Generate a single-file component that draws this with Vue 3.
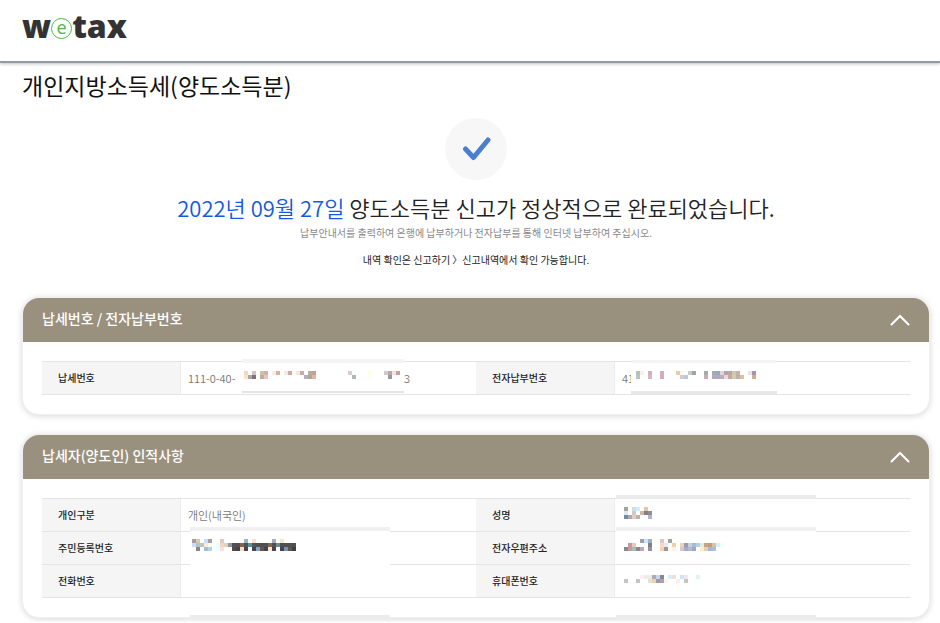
<template>
  <div class="page">
    <header class="site-header">
      <a class="logo" href="#" aria-label="wetax">
        <span>w</span><span class="logo-e">e</span><span>tax</span>
      </a>
    </header>

    <main class="content">
      <h1>개인지방소득세(양도소득분)</h1>

      <section class="result">
        <span class="result-icon">
          <svg width="30" height="26" viewBox="0 0 30 26" aria-hidden="true">
            <path d="M4.5 13 L12.5 21.5 L27 4" />
          </svg>
        </span>
        <p class="headline"><em>2022년 09월 27일</em> 양도소득분 신고가 정상적으로 완료되었습니다.</p>
        <p class="guide">납부안내서를 출력하여 은행에 납부하거나 전자납부를 통해 인터넷 납부하여 주십시오.</p>
        <p class="note">내역 확인은 신고하기 〉신고내역에서 확인 가능합니다.</p>
      </section>

      <section v-for="card in cards" :key="card.title" class="card">
        <div class="card-head">
          <h2>{{ card.title }}</h2>
          <button type="button" :aria-label="card.title" :aria-expanded="card.open" @click="card.open = !card.open">
            <svg :class="{ closed: !card.open }" width="20" height="12" viewBox="0 0 20 12" aria-hidden="true">
              <path d="M1.5 10.5 L10 2 L18.5 10.5" />
            </svg>
          </button>
        </div>
        <div v-show="card.open" class="card-body">
          <table>
            <tbody>
              <tr v-for="(row, i) in card.rows" :key="i">
                <template v-for="cell in row" :key="cell.label">
                  <th scope="row">{{ cell.label }}</th>
                  <td>
                    <span v-if="cell.value">{{ cell.value }}</span>
                    <span v-if="cell.tail" class="tail">{{ cell.tail }}</span>
                    <svg
                      v-if="cell.mask"
                      class="mask"
                      :class="cell.mask.name"
                      :width="cell.mask.width"
                      :height="cell.mask.height"
                      shape-rendering="crispEdges"
                      aria-hidden="true"
                    >
                      <rect width="100%" height="100%" fill="#fff" />
                      <rect
                        v-for="band in cell.mask.bands"
                        :key="band[0]"
                        :y="band[0]"
                        width="100%"
                        :height="band[1]"
                        :fill="band[2]"
                      />
                      <rect
                        v-for="(block, n) in blocks(cell.mask)"
                        :key="n"
                        :x="block.x"
                        :y="block.y"
                        width="4"
                        height="4"
                        :fill="block.fill"
                      />
                    </svg>
                  </td>
                </template>
              </tr>
            </tbody>
          </table>
        </div>
      </section>
    </main>
  </div>
</template>

<script setup>
import { ref } from "vue";

const BLOCK = 4;

// each line: [y, "column:color column:color ..."]
const taxNumberMask = {
  name: "mask-tax",
  width: 162,
  height: 34,
  left: 2,
  bands: [
    [0, 4, "#f4f4f4"],
    [32, 2, "#e4e4e4"],
  ],
  lines: [
    [12, "0:e8dac8 2:c8c4c8 4:ccc4a4 5:d0b0b0 7:f8ece8 8:d8b0a0 10:f4e8e4 11:d0a8a4 13:f4e8e4 14:d0a8a4 16:b0b0a0 17:c0a098 26:d8ccd0 31:ffffe0 35:d4c8cc 36:b8a8ac 37:f4e4e0 38:c8a0a0"],
    [16, "0:ffe4c4 1:b0a4a4 2:807078 4:b8b0a0 5:ecc4c0 15:b8a8cc 16:b0a890 17:e0b8a0 27:a8b8bc 31:f8fffc 36:989898"],
  ],
};

const payNumberMask = {
  name: "mask-pay",
  width: 146,
  height: 34,
  left: 5,
  bands: [
    [0, 3, "#f4f4f4"],
    [31, 3, "#e8e8e8"],
  ],
  lines: [
    [11, "0:b8c0bc 1:fcf0e4 3:d0b0bc 6:d0b0bc 10:e8ccb0 11:fff8f0 13:c8ccc8 14:a0a4a4 17:a0acb0 19:a8a8b0 20:98a8b8 21:dcd4e0 22:b8a0a4 23:b8a8a8 24:d0c8b0 25:c4b4a4 28:e8e4ec 29:a890b0"],
    [15, "0:b8c4c0 3:dcb4bc 6:d4acbc 11:e0c8c0 12:b0cce0 17:d0a8b8 19:b0a8c4 20:b0a8c0 21:b4b0b4 22:ecd8dc 23:c4a8a4 24:d0ccac 25:bcb0b8 26:e4c090 29:d0b08c"],
  ],
};

const residentMask = {
  name: "mask-resident",
  width: 200,
  height: 92,
  left: 2,
  bands: [
    [0, 4, "#f0f0f0"],
    [88, 4, "#ececec"],
  ],
  lines: [
    [12, "0:a0a0a4 1:e0c4ac 3:c8e0fc 4:a0a0a0 7:dcccc4 13:98b4cc 15:f8e0d0 20:a8acb8 22:fce4d0"],
    [16, "0:c8dcfc 1:b8c0c4 2:bcc4c4 3:fcecd8 4:fffce8 6:e8ffff 7:f0d4c4 8:e8d0b0 9:8898a4 10:505050 11:505050 12:806450 13:505054 14:5890a0 15:505458 16:505050 17:505050 18:505050 19:806850 20:505050 21:708890 22:505050 23:505050 24:505050 25:505050"],
    [20, "1:888888 3:a0bcdc 4:b8d0e8 6:e8ffff 7:f4e0d8 10:5c4840 11:44404c 12:f8dcc8 13:484450 15:444450 16:80a4cc 17:705048 18:444450 19:ffe4cc 20:484450 22:444450 23:7890b8 24:605850 25:404040"],
  ],
};

const personMask = {
  name: "mask-person",
  width: 200,
  height: 124,
  left: 8,
  bands: [
    [0, 4, "#ebebeb"],
    [32, 4, "#f0f0f0"],
    [120, 4, "#ebebeb"],
  ],
  lines: [
    [12, "0:a0a4a0 1:ffffec 2:d0dcf4 3:c8f0ff 5:e4c4a8"],
    [16, "0:e0e8f4 2:cccccc 4:d4b4a8 5:808080 6:909090"],
    [20, "0:708ca0 1:b0a8a4 2:e8ccc0 3:b8b4b0 6:b4b0d8"],
    [44, "4:a0a0a4 5:cce4fc 6:a0b0c8 7:fffcf0 9:d8c8c8 11:a0a0a0"],
    [48, "1:c898a0 2:e8c8b8 6:808084 9:fcd8c0 10:e0e8ff 12:ecd0a8 14:e8d4b8 15:9898b8 16:c8d0d0 17:a4bcdc 18:b8d0dc 19:dcecf0 20:c8a480 21:b8a080 22:e0c098 23:d4f0fc 24:f0ffff"],
    [52, "0:888888 1:c898a0 2:a0c0c0 3:888888 4:c0a8b0 6:9490a8 9:f8d0b8 10:a89484 12:fff4e0 14:d4c8d4 15:a8a8c8 16:b8b8cc 17:98a8c8 19:fff0c8 20:e8ccb4 21:a8b8d4 22:a8c0dc"],
    [80, "4:fcf0f0 5:ececec 6:f0ece4 7:b0a8b8 8:c0d8f4 9:888888 11:d0f0fc 12:e8e0dc 14:cce4fc 15:f0e8e8 18:dcf4f8"],
    [84, "0:c4c4c4 3:c4c4c4 6:e8e0d8 7:ecd0b0 8:a098a8 9:a8a0b8 10:fff4e0 13:fff0e4 15:c4c4c4"],
  ],
};

const cards = ref([
  {
    title: "납세번호 / 전자납부번호",
    open: true,
    rows: [
      [
        { label: "납세번호", value: "111-0-40-", tail: "3", mask: taxNumberMask },
        { label: "전자납부번호", value: "41", mask: payNumberMask },
      ],
    ],
  },
  {
    title: "납세자(양도인) 인적사항",
    open: true,
    rows: [
      [
        { label: "개인구분", value: "개인(내국인)" },
        { label: "성명", mask: personMask },
      ],
      [
        { label: "주민등록번호", mask: residentMask },
        { label: "전자우편주소" },
      ],
      [{ label: "전화번호" }, { label: "휴대폰번호" }],
    ],
  },
]);

function blocks(mask) {
  return mask.lines.flatMap(([y, line]) =>
    line.split(" ").map((item) => {
      const [column, color] = item.split(":");
      return { x: mask.left + Number(column) * BLOCK, y, fill: `#${color}` };
    })
  );
}
</script>

<style>
body {
  margin: 0;
  background: #fff;
}
</style>

<style scoped>
.page {
  font-family: "Noto Sans CJK KR", "Noto Sans", sans-serif;
  color: #222;
}

h1,
h2,
p {
  margin: 0;
}

.site-header {
  display: flex;
  box-sizing: border-box;
  height: 63px;
  padding: 5px 22px 0;
  border-bottom: 2px solid #929aa5;
  box-shadow: 0 1px 3px rgba(0, 0, 0, 0.25);
}

.logo {
  display: flex;
  align-items: center;
  height: 42px;
  font-family: "Open Sans", sans-serif;
  font-size: 32px;
  font-weight: 800;
  line-height: 42px;
  color: #333;
  text-decoration: none;
}

.logo-e {
  box-sizing: border-box;
  width: 21px;
  height: 21px;
  margin-top: 4px;
  border: 1px solid #4cb748;
  border-radius: 50%;
  background: #fff;
  font-size: 18px;
  font-weight: 400;
  line-height: 16px;
  text-align: center;
  color: #4cb748;
}

.content {
  padding: 6px 10px 4px 22px;
}

h1 {
  font-size: 23px;
  font-weight: 400;
  line-height: 32px;
  color: #111;
}

.result {
  display: flex;
  flex-direction: column;
  align-items: center;
  padding: 17px 0 29px;
  text-align: center;
}

.result-icon {
  display: flex;
  align-items: center;
  justify-content: center;
  width: 62px;
  height: 62px;
  border-radius: 50%;
  background: #f7f7f7;
}

.result-icon path {
  fill: none;
  stroke: #4a7fd0;
  stroke-width: 5;
  stroke-linecap: round;
  stroke-linejoin: round;
}

.headline {
  margin-top: 10px;
  font-size: 22px;
  font-weight: 350;
  line-height: 34px;
}

.headline em {
  font-style: normal;
  color: #1459e0;
}

.guide {
  margin-top: 1px;
  font-size: 10px;
  line-height: 16px;
  color: #888;
}

.note {
  margin-top: 11px;
  font-size: 10px;
  line-height: 16px;
}

.card {
  border: 1px solid #f0f0f0;
  border-radius: 17px;
  background: #fff;
  box-shadow: 0 1px 6px rgba(0, 0, 0, 0.16);
}

.card + .card {
  margin-top: 19px;
}

.card-head {
  display: flex;
  align-items: center;
  justify-content: space-between;
  height: 44px;
  padding: 0 19px;
  border-radius: 16px 16px 0 0;
  background: #9a907e;
}

h2 {
  padding-bottom: 4px;
  font-size: 14px;
  font-weight: 500;
  line-height: 20px;
  color: #fff;
}

.card-head button {
  display: flex;
  padding: 0;
  border: 0;
  background: none;
  cursor: pointer;
}

.card-head path {
  fill: none;
  stroke: #fff;
  stroke-width: 2;
  stroke-linecap: round;
}

.closed {
  transform: rotate(180deg);
}

.card-body {
  padding: 19px;
}

table {
  width: 100%;
  table-layout: fixed;
  border-collapse: separate;
  border-spacing: 0;
  border-top: 1px solid #e4e4e4;
}

th,
td {
  box-sizing: border-box;
  height: 33px;
  border-bottom: 1px solid #e4e4e4;
  font-size: 10px;
  line-height: 16px;
  text-align: left;
}

th {
  width: 16%;
  padding: 0 16px;
  border-right: 1px solid #ececec;
  background: #f5f5f5;
  font-weight: 500;
}

td {
  position: relative;
  padding: 0 7px;
  font-size: 11px;
  font-weight: 350;
  color: #777;
}

.tail {
  position: absolute;
  left: 223px;
}

.mask {
  position: absolute;
}

.mask-tax {
  top: -3px;
  left: 61px;
}

.mask-pay {
  top: -2px;
  left: 16px;
}

.mask-resident {
  top: -5px;
  left: 9px;
}

.mask-person {
  top: -4px;
  left: 1px;
}
</style>
